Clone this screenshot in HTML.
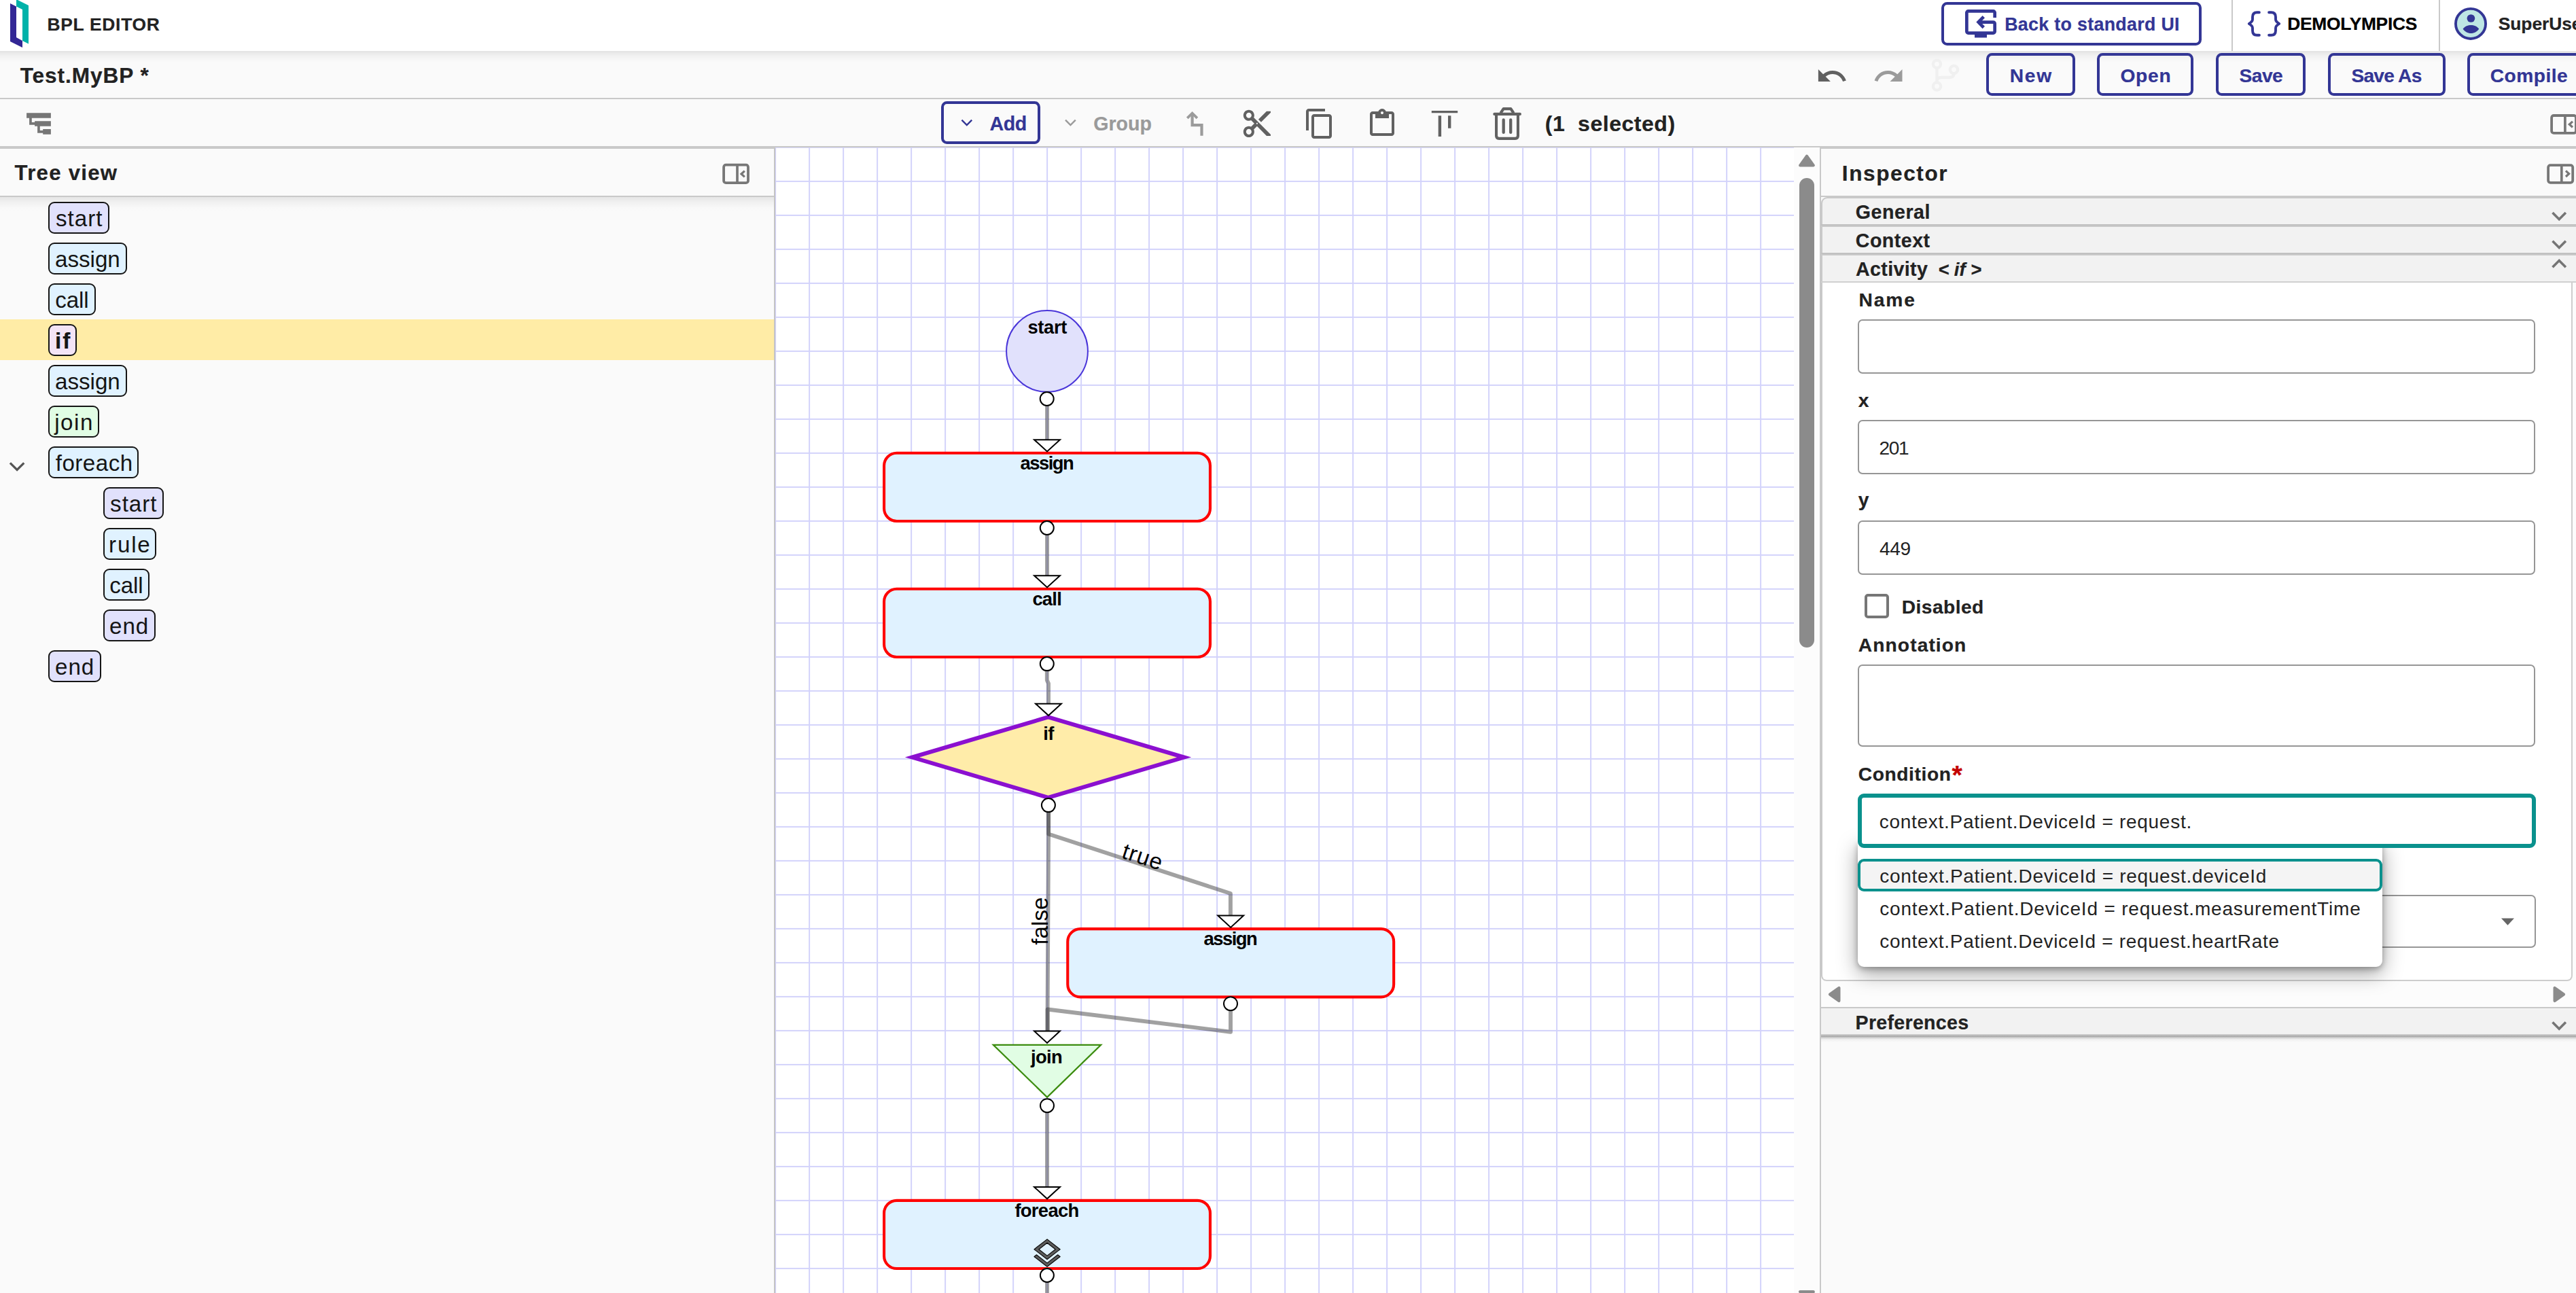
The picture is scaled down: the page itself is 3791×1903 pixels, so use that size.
<!DOCTYPE html>
<html lang="en">
<head>
<meta charset="utf-8">
<title>BPL Editor - Test.MyBP</title>
<style>
*{box-sizing:border-box;margin:0;padding:0}
html,body{width:3791px;height:1903px;overflow:hidden;background:#fafafa}
body{position:relative;font-family:"Liberation Sans",sans-serif;color:#222}
.a{position:absolute}
.t{position:absolute;white-space:pre;line-height:1;font-family:"Liberation Sans",sans-serif}
.btn{position:absolute;border:4px solid #333695;border-radius:8.5px;background:transparent}
.pill{position:absolute;border:2px solid #151515;border-radius:9px;height:47.1px}
.inp{position:absolute;border:2px solid #969696;border-radius:7px;background:#fff}
svg{position:absolute;overflow:visible}
</style>
</head>
<body>

<!-- ===== top application bar ===== -->
<header class="a" id="topbar" style="left:0;top:0;width:3791px;height:75px;background:#fff"></header>
<div class="a" style="left:0;top:75px;width:3791px;height:17px;background:linear-gradient(to bottom,rgba(0,0,0,.095),rgba(0,0,0,.04) 40%,rgba(0,0,0,0))"></div>
<div class="a" style="left:3284.3px;top:0;width:1.6px;height:75px;background:#c9c9c9"></div>
<div class="a" style="left:3589.3px;top:0;width:1.6px;height:75px;background:#c9c9c9"></div>
<div class="btn" style="left:2857px;top:3.2px;width:382.8px;height:63.6px"></div>

<!-- ===== title bar ===== -->
<div class="a" style="left:0;top:143.6px;width:3791px;height:2px;background:#c9c9c9"></div>
<div class="btn" style="left:2923.3px;top:78.3px;width:130.4px;height:63.2px"></div>
<div class="btn" style="left:3086.3px;top:78.3px;width:142.2px;height:63.2px"></div>
<div class="btn" style="left:3261.3px;top:78.3px;width:132.2px;height:63.2px"></div>
<div class="btn" style="left:3426.2px;top:78.3px;width:172.6px;height:63.2px"></div>
<div class="btn" style="left:3631.1px;top:78.3px;width:180px;height:63.2px"></div>

<!-- ===== toolbar ===== -->
<div class="a" style="left:0;top:214.9px;width:3791px;height:2.4px;background:#c9c9c9"></div>
<div class="btn" style="left:1385.2px;top:149.1px;width:145.7px;height:63.3px"></div>

<!-- ===== tree panel ===== -->
<section class="a" id="tree" style="left:0;top:217px;width:1141px;height:1686px;background:#fafafa;border-right:2px solid #c4c4c4;border-top:2px solid #c9c9c9"></section>
<div class="a" style="left:0;top:287.7px;width:1139.1px;height:2.2px;background:#c9c9c9"></div>
<div class="a" style="left:0;top:289.9px;width:1139.1px;height:21px;background:linear-gradient(to bottom,rgba(0,0,0,.082),rgba(0,0,0,.035) 40%,rgba(0,0,0,.008) 75%,rgba(0,0,0,0))"></div>
<div class="a" style="left:0;top:470px;width:1139.1px;height:59.8px;background:#ffeca6"></div>
<div class="pill" style="left:71.2px;top:296.9px;width:89.8px;background:#e1e1fc"></div>
<div class="pill" style="left:71.2px;top:356.9px;width:115.4px;background:#e0f2ff"></div>
<div class="pill" style="left:71.2px;top:416.9px;width:69.4px;background:#e0f2ff"></div>
<div class="pill" style="left:71.2px;top:476.9px;width:41.4px;background:#f3e4f6"></div>
<div class="pill" style="left:71.2px;top:536.9px;width:115.4px;background:#e0f2ff"></div>
<div class="pill" style="left:71.2px;top:596.9px;width:75.3px;background:#e1fde4"></div>
<div class="pill" style="left:71.2px;top:656.9px;width:133.3px;background:#e0f2ff"></div>
<div class="pill" style="left:151.5px;top:716.9px;width:89.1px;background:#e1e1fc"></div>
<div class="pill" style="left:151.5px;top:776.9px;width:78.2px;background:#e0f2ff"></div>
<div class="pill" style="left:151.5px;top:836.9px;width:68.9px;background:#e0f2ff"></div>
<div class="pill" style="left:151.5px;top:896.9px;width:77.0px;background:#e1e1fc"></div>
<div class="pill" style="left:71.2px;top:956.9px;width:77.8px;background:#e1e1fc"></div>

<!-- ===== diagram canvas ===== -->
<main class="a" id="canvas" style="left:1141px;top:217.2px;width:1499px;height:1685.8px;background-color:#fff;background-image:linear-gradient(to right,#d3d3fb 1.7px,transparent 1.7px),linear-gradient(to bottom,#d3d3fb 1.7px,transparent 1.7px);background-size:50px 50px;background-position:-0.9px -1.1px"></main>
<svg id="diagram" style="left:0;top:0" width="3791" height="1903" viewBox="0 0 3791 1903">
<circle cx="1541" cy="516.9" r="59.9" fill="#e1e1fc" stroke="#4a36d9" stroke-width="2"/>
<rect x="1301.05" y="666.75" width="479.9" height="100.2" rx="18.6" fill="#e0f2ff" stroke="#ff0000" stroke-width="4.1"/>
<rect x="1301.05" y="866.75" width="479.9" height="100.2" rx="18.6" fill="#e0f2ff" stroke="#ff0000" stroke-width="4.1"/>
<polygon points="1542.6,1055.4 1742.6,1114.6 1542.6,1173.8 1342.4,1114.6" fill="#ffeca9" stroke="#8b10d0" stroke-width="6"/>
<rect x="1571.25" y="1367.15" width="479.9" height="100.2" rx="18.6" fill="#e0f2ff" stroke="#ff0000" stroke-width="4.1"/>
<polygon points="1461.8,1537.8 1620.2,1537.8 1541,1614.9" fill="#e1fde4" stroke="#3c8c0f" stroke-width="2.2"/>
<rect x="1301.05" y="1766.85" width="479.9" height="100.2" rx="18.6" fill="#e0f2ff" stroke="#ff0000" stroke-width="4.1"/>
<g transform="translate(1515.6 1819.6) scale(2.12)"><path d="M11.99 18.54l-7.37-5.73L3 14.07l9 7 9-7-1.63-1.27-7.38 5.74zM12 16l7.36-5.73L21 9l-9-7-9 7 1.63 1.27L12 16zm0-11.47L17.74 9 12 13.47 6.26 9 12 4.53z" fill="#5c5c5c" stroke="#0a0a0a" stroke-width=".55" stroke-linejoin="round"/></g>
<path d="M1541 587V647" fill="none" stroke="#333" stroke-opacity=".46" stroke-width="5.9" stroke-linejoin="round"/>
<path d="M1541 777V847" fill="none" stroke="#333" stroke-opacity=".46" stroke-width="5.9" stroke-linejoin="round"/>
<path d="M1540.8 977V1001L1543 1006V1036" fill="none" stroke="#333" stroke-opacity=".46" stroke-width="5.9" stroke-linejoin="round"/>
<path d="M1543.05 1185V1227.5L1810.9 1315V1347.5" fill="none" stroke="#333" stroke-opacity=".46" stroke-width="5.9" stroke-linejoin="round"/>
<path d="M1543.05 1185V1227.5L1541.6 1485.5V1517.5" fill="none" stroke="#333" stroke-opacity=".46" stroke-width="5.9" stroke-linejoin="round"/>
<path d="M1811 1477V1518.7L1541.6 1485.5V1517.5" fill="none" stroke="#333" stroke-opacity=".46" stroke-width="5.9" stroke-linejoin="round"/>
<path d="M1541 1627V1747" fill="none" stroke="#333" stroke-opacity=".46" stroke-width="5.9" stroke-linejoin="round"/>
<path d="M1541 1877V1910" fill="none" stroke="#333" stroke-opacity=".46" stroke-width="5.9" stroke-linejoin="round"/>
<polygon points="1522.1,647.2 1559.9,647.2 1541.0,664.5" fill="#fff" stroke="#000" stroke-width="2"/>
<polygon points="1522.1,847.2 1559.9,847.2 1541.0,864.5" fill="#fff" stroke="#000" stroke-width="2"/>
<polygon points="1524.1,1035.8 1561.9,1035.8 1543.0,1053.1" fill="#fff" stroke="#000" stroke-width="2"/>
<polygon points="1792.3,1347.6 1830.1,1347.6 1811.2,1364.9" fill="#fff" stroke="#000" stroke-width="2"/>
<polygon points="1522.1,1517.6 1559.9,1517.6 1541.0,1534.9" fill="#fff" stroke="#000" stroke-width="2"/>
<polygon points="1522.1,1747.0 1559.9,1747.0 1541.0,1764.3" fill="#fff" stroke="#000" stroke-width="2"/>
<circle cx="1540.7" cy="587.0" r="10" fill="#fff" stroke="#000" stroke-width="2"/>
<circle cx="1540.8" cy="777.0" r="10" fill="#fff" stroke="#000" stroke-width="2"/>
<circle cx="1540.8" cy="977.1" r="10" fill="#fff" stroke="#000" stroke-width="2"/>
<circle cx="1542.9" cy="1185.1" r="10" fill="#fff" stroke="#000" stroke-width="2"/>
<circle cx="1811.0" cy="1477.2" r="10" fill="#fff" stroke="#000" stroke-width="2"/>
<circle cx="1541.0" cy="1627.2" r="10" fill="#fff" stroke="#000" stroke-width="2"/>
<circle cx="1540.9" cy="1877.0" r="10" fill="#fff" stroke="#000" stroke-width="2"/>
<text transform="translate(1678.4 1271.7) rotate(18.1)" text-anchor="middle" font-family="Liberation Sans, sans-serif" font-size="33.2" letter-spacing="1.1" fill="#000">true</text>
<text transform="translate(1541.6 1355.6) rotate(-90)" text-anchor="middle" font-family="Liberation Sans, sans-serif" font-size="33.2" letter-spacing="0" fill="#000">false</text>
</svg>

<!-- canvas vertical scrollbar -->
<div class="a" style="left:2640px;top:217.2px;width:38px;height:1685.8px;background:#fcfcfc"></div>
<div class="a" style="left:2648px;top:261.7px;width:22.1px;height:691.3px;border-radius:11px;background:#8b8b8b"></div>
<svg style="left:0;top:0" width="3791" height="1903">
<path d="M2659 229.8 L2668.8 243.4 L2649.2 243.4 Z" fill="#8b8b8b" stroke="#8b8b8b" stroke-width="4.2" stroke-linejoin="round"/>
<path d="M2649.4 1901.2 L2668.6 1901.2 L2659 1914 Z" fill="#8b8b8b" stroke="#8b8b8b" stroke-width="4.6" stroke-linejoin="round"/>
</svg>

<!-- ===== inspector ===== -->
<aside class="a" id="inspector" style="left:2678px;top:217px;width:1113px;height:1686px;background:#fafafa;border-left:2px solid #c9c9c9;border-top:2px solid #c9c9c9"></aside>
<div class="a" style="left:2680px;top:287.7px;width:1111px;height:2px;background:#c9c9c9"></div>
<div class="a" style="left:2680px;top:289.6px;width:1120px;height:40px;background:#f2f2f2;border-top:2px solid #c9c9c9;border-left:2px solid #c9c9c9;border-top-left-radius:9px"></div>
<div class="a" style="left:2680px;top:329.5px;width:1111px;height:4.5px;background:linear-gradient(to bottom,#bdbdbd,#cdcdcd)"></div>
<div class="a" style="left:2680px;top:334px;width:1111px;height:38px;background:#f2f2f2;border-left:2px solid #c9c9c9"></div>
<div class="a" style="left:2680px;top:371.9px;width:1111px;height:4.4px;background:linear-gradient(to bottom,#bdbdbd,#cdcdcd)"></div>
<div class="a" style="left:2680px;top:376.3px;width:1111px;height:37.3px;background:#f2f2f2;border-left:2px solid #c9c9c9"></div>
<div class="a" style="left:2680px;top:413.6px;width:1111px;height:2px;background:#d0d0d0"></div>
<div class="a" style="left:2680px;top:415.6px;width:1111px;height:1028.3px;background:#fcfcfc"></div>
<div class="a" id="activity" style="left:2680px;top:415.6px;width:1106px;height:1028.3px;background:#fff;border-left:2px solid #c9c9c9;border-right:2px solid #cdcdcd;border-bottom:2px solid #cdcdcd;border-radius:0 0 8px 8px"></div>
<div class="a" style="left:2680px;top:1443.9px;width:1111px;height:38.2px;background:#fcfcfc"></div>
<div class="a" style="left:2680px;top:1482px;width:1111px;height:40.2px;background:#f2f2f2;border-top:2px solid #c9c9c9"></div>
<div class="a" style="left:2680px;top:1522px;width:1111px;height:12px;background:linear-gradient(to bottom,#cbcbcb 0,#c9c9c9 1.8px,#a9a9a9 2.4px,#b0b0b0 3.6px,rgba(190,190,190,.6) 5.5px,rgba(215,215,215,.25) 8px,rgba(240,240,240,0) 12px)"></div>
<div class="inp" style="left:2734.1px;top:469.9px;width:997.4px;height:79.8px"></div>
<div class="inp" style="left:2734.1px;top:618.4px;width:997.4px;height:79.5px"></div>
<div class="inp" style="left:2734.1px;top:766.2px;width:997.4px;height:79.6px"></div>
<div class="a" style="left:2744.1px;top:874px;width:36px;height:36px;border:4px solid #767676;border-radius:5px;background:#fff"></div>
<div class="inp" style="left:2734.1px;top:978.3px;width:997.4px;height:121px"></div>
<div class="inp" style="left:2734.1px;top:1316.5px;width:997.5px;height:78.7px"></div>
<div class="a" style="left:2733.8px;top:1240px;width:772.1px;height:183.4px;background:#fff;border-radius:0 0 9px 9px;box-shadow:0 3px 9px rgba(0,0,0,.28),0 9px 30px 1px rgba(0,0,0,.36)"></div>
<div class="a" style="left:2733.8px;top:1264.1px;width:772.1px;height:47.5px;background:#f4f4f4;border:4px solid #0a918d;border-radius:9px"></div>
<div class="a" style="left:2733.8px;top:1167.9px;width:997.9px;height:79.9px;background:#fff;border:6px solid #0a918d;border-radius:9px"></div>

<svg id="icons" style="left:0;top:0" width="3791" height="1903" viewBox="0 0 3791 1903">
<polygon points="24,-1 42,8 42,64.5 33,60 33,14 24,9.5" fill="#00b2a9"/>
<polygon points="15,5 24,9.5 24,55 33,60 33,70 15,61" fill="#332795"/>
<g fill="none" stroke="#333695" stroke-width="4.7"><path d="M2935.65 25.9V18.6a2.2 2.2 0 0 0-2.2-2.2H2896.55a2.2 2.2 0 0 0-2.2 2.2V46.35a2.2 2.2 0 0 0 2.2 2.2H2933.45a2.2 2.2 0 0 0 2.2-2.2V34.8a2.2 2.2 0 0 0-2.2-2.2H2911.6" stroke-linejoin="round"/><path d="M2919.3 24.7L2911.6 32.6L2919.3 40.5"/></g>
<rect x="2906" y="50.6" width="18" height="4.8" fill="#333695"/>
<g fill="none" stroke="#333695" stroke-width="3.9" stroke-linecap="round" stroke-linejoin="round"><path d="M3324.9 18.2H3321.6Q3315 18.2 3315 25V28.6Q3315 31.8 3309.8 34.95Q3315 38.1 3315 41.3V45Q3315 51.8 3321.6 51.8H3324.9"/><path d="M3339.1 18.2H3342.4Q3349 18.2 3349 25V28.6Q3349 31.8 3354.2 34.95Q3349 38.1 3349 41.3V45Q3349 51.8 3342.4 51.8H3339.1"/></g>
<circle cx="3636" cy="34.9" r="22.05" fill="#bee6e4" stroke="#333695" stroke-width="3.9"/>
<circle cx="3636.4" cy="27" r="5.85" fill="#333695"/>
<path d="M3624.6 42.6C3627.5 38.7 3632 37.1 3636.4 37.1C3640.8 37.1 3645.3 38.7 3648.2 42.6C3645.6 46.6 3641.3 49.1 3636.4 49.1C3631.5 49.1 3627.2 46.6 3624.6 42.6Z" fill="#333695"/>
<g transform="translate(2671.9 88) scale(2.0000)"><path d="M12.5 8c-2.65 0-5.05.99-6.9 2.6L2 7v9h9l-3.62-3.62c1.39-1.16 3.16-1.88 5.12-1.88 3.54 0 6.55 2.31 7.6 5.5l2.37-.78C21.08 11.03 17.15 8 12.5 8z" fill="#616161" /></g>
<g transform="translate(2755.5 88) scale(2.0000)"><path d="M18.4 10.6C16.55 8.99 14.15 8 11.5 8c-4.65 0-8.58 3.03-9.96 7.22L3.9 16c1.05-3.19 4.05-5.5 7.6-5.5 1.95 0 3.73.72 5.12 1.88L13 16h9V7l-3.6 3.6z" fill="#9b9b9b" /></g>
<g fill="none" stroke="#f0f0f0" stroke-width="4.4"><circle cx="2850.5" cy="94.3" r="5.6"/><circle cx="2850.5" cy="127" r="5.6"/><circle cx="2875.5" cy="102.5" r="5.6"/><path d="M2850.5 100V121.5M2875.5 108.1Q2875.5 114 2869 114H2857Q2850.5 114 2850.5 119"/></g>
<path fill="#767676" d="M39.1 166.2H74.9V173.75H46.8V180.1H51.1V178.2H74.9V185.7H58.8V192.1H63.2V190.1H74.9V197.7H63.2V195.8H55.1V185.7H51.1V183.8H43.1V173.75H39.1Z"/>
<path d="M1415.4 176.7L1422.8 184.1L1430.2 176.7" fill="none" stroke="#333695" stroke-width="2.4"/>
<path d="M1568 176.7L1575.4 184.1L1582.8 176.7" fill="none" stroke="#9a9a9a" stroke-width="2.4"/>
<g fill="none" stroke="#9b9b9b" stroke-width="4.2"><path d="M1747.3 173.9L1754.6 166.7L1761.9 173.9" stroke-width="3.9"/><path d="M1754.6 167.5V184.05H1768.5V199.8"/></g>
<g transform="translate(1825.8 157.7) scale(2.0100)"><path d="M9.64 7.64c.23-.5.36-1.05.36-1.64 0-2.21-1.79-4-4-4S2 3.79 2 6s1.79 4 4 4c.59 0 1.14-.13 1.64-.36L10 12l-2.36 2.36C7.14 14.13 6.59 14 6 14c-2.21 0-4 1.79-4 4s1.79 4 4 4 4-1.79 4-4c0-.59-.13-1.14-.36-1.64L12 14l7 7h3v-1L9.64 7.64zM6 8c-1.1 0-2-.89-2-2s.9-2 2-2 2 .89 2 2-.9 2-2 2zm0 12c-1.1 0-2-.89-2-2s.9-2 2-2 2 .89 2 2-.9 2-2 2zm6-7.5c-.28 0-.5-.22-.5-.5s.22-.5.5-.5.5.22.5.5-.22.5-.5.5zM19 3l-6 6 2 2 7-7V3z" fill="#616161" /></g>
<g transform="translate(1918 158) scale(2.0000)"><path d="M16 1H4c-1.1 0-2 .9-2 2v14h2V3h12V1zm3 4H8c-1.1 0-2 .9-2 2v14c0 1.1.9 2 2 2h11c1.1 0 2-.9 2-2V7c0-1.1-.9-2-2-2zm0 16H8V7h11v14z" fill="#616161" /></g>
<g transform="translate(2010 158) scale(2.0000)"><path d="M5 21q-.825 0-1.412-.587T3 19V5q0-.825.588-1.412T5 3h4.175q.275-.875 1.075-1.437T12 1q1 0 1.788.563T14.85 3H19q.825 0 1.413.588T21 5v14q0 .825-.587 1.413T19 21zm0-2h14V5h-2v3H7V5H5zm7-14q.425 0 .713-.288T13 4t-.288-.712T12 3t-.712.288T11 4t.288.713T12 5" fill="#616161" /></g>
<path fill="#616161" d="M2106.8 162.9H2145.2V166.3H2106.8ZM2116.7 170.2H2121.1V200.9H2116.7ZM2131 170.2H2135.4V188.8H2131Z"/>
<g fill="none" stroke="#616161" stroke-width="4.1" stroke-linejoin="round"><path d="M2199.3 167.9H2236.9" stroke-linecap="round"/><path d="M2208.4 166.5L2212.6 160.15H2223.4L2227.6 166.5"/><path d="M2202.05 169V199.8Q2202.05 203.85 2206.1 203.85H2229.9Q2233.95 203.85 2233.95 199.8V169"/><path d="M2212.7 176.5V194.9M2223.2 176.5V194.9" stroke-width="4.3" stroke-linecap="round"/></g>
<rect x="1065.1000000000001" y="242.70000000000002" width="35.900000000000006" height="26.4" rx="3.2" fill="none" stroke="#777" stroke-width="3.8"/><path d="M1085 242.8V269.0" stroke="#777" stroke-width="3.7" fill="none"/><path d="M1095.8 251.6L1091 256L1095.8 260.4" fill="none" stroke="#777" stroke-width="3.2"/>
<rect x="3755.1" y="170.0" width="35.900000000000006" height="25.9" rx="3.2" fill="none" stroke="#777" stroke-width="3.8"/><path d="M3774.9 170.1V195.79999999999998" stroke="#777" stroke-width="3.7" fill="none"/><path d="M3786 178.9L3781.3 183.1L3786 187.3" fill="none" stroke="#777" stroke-width="3.2"/>
<rect x="3750.1" y="243.1" width="36.1" height="25.7" rx="3.2" fill="none" stroke="#777" stroke-width="3.8"/><path d="M3769.8 243.2V268.7" stroke="#777" stroke-width="3.7" fill="none"/><path d="M3776 251.4L3780.6 255.7L3776 260" fill="none" stroke="#777" stroke-width="3.2"/>
<path d="M3756.5 313.09999999999997L3766.2 322.79999999999995L3775.9 313.09999999999997" fill="none" stroke="#757575" stroke-width="3.6"/>
<path d="M3756.5 354.8L3766.2 364.5L3775.9 354.8" fill="none" stroke="#757575" stroke-width="3.6"/>
<path d="M3756.5 393.2L3766.2 383.5L3775.9 393.2" fill="none" stroke="#757575" stroke-width="3.6"/>
<path d="M3756.5 1504.5L3766.2 1514.2L3775.9 1504.5" fill="none" stroke="#757575" stroke-width="3.6"/>
<path d="M14.9 681.3L25.1 691.5L35.3 681.3" fill="none" stroke="#555" stroke-width="3.3"/>
<path d="M3681 1351.6H3700L3690.5 1361.8Z" fill="#666"/>
<path d="M2706.4 1453.9V1473.1L2693 1463.5Z" fill="#8b8b8b" stroke="#8b8b8b" stroke-width="4.2" stroke-linejoin="round"/>
<path d="M3759.6 1453.9V1473.1L3773 1463.5Z" fill="#8b8b8b" stroke="#8b8b8b" stroke-width="4.2" stroke-linejoin="round"/>
</svg>

<span class="t" style="left:69.50px;top:22.80px;font-size:26.4px;color:#232323;font-weight:bold;-webkit-text-stroke:.22px #232323;letter-spacing:0.714px">BPL EDITOR</span>
<span class="t" style="left:2950.20px;top:22.70px;font-size:26.8px;color:#333695;font-weight:bold;-webkit-text-stroke:.22px #333695;letter-spacing:0.316px">Back to standard UI</span>
<span class="t" style="left:3366.30px;top:21.60px;font-size:26.4px;color:#000;font-weight:bold;-webkit-text-stroke:.22px #000;letter-spacing:-0.305px">DEMOLYMPICS</span>
<span class="t" style="left:3676.70px;top:21.60px;font-size:26.4px;color:#232323;font-weight:bold;-webkit-text-stroke:.22px #232323;letter-spacing:-0.050px">SuperUser</span>
<span class="t" style="left:29.70px;top:95.70px;font-size:31.6px;color:#222;font-weight:bold;-webkit-text-stroke:.22px #222;letter-spacing:0.935px">Test.MyBP *</span>
<span class="t" style="left:2957.70px;top:97.10px;font-size:28.2px;color:#333695;font-weight:bold;-webkit-text-stroke:.22px #333695;letter-spacing:1.734px">New</span>
<span class="t" style="left:3120.40px;top:97.10px;font-size:28.2px;color:#333695;font-weight:bold;-webkit-text-stroke:.22px #333695;letter-spacing:0.760px">Open</span>
<span class="t" style="left:3295.50px;top:97.10px;font-size:28.2px;color:#333695;font-weight:bold;-webkit-text-stroke:.22px #333695;letter-spacing:-0.551px">Save</span>
<span class="t" style="left:3460.50px;top:97.10px;font-size:28.2px;color:#333695;font-weight:bold;-webkit-text-stroke:.22px #333695;letter-spacing:-0.803px">Save As</span>
<span class="t" style="left:3664.80px;top:97.10px;font-size:28.2px;color:#333695;font-weight:bold;-webkit-text-stroke:.22px #333695;letter-spacing:0.447px">Compile</span>
<span class="t" style="left:1456.50px;top:168.20px;font-size:28.6px;color:#333695;font-weight:bold;-webkit-text-stroke:.22px #333695;letter-spacing:-0.408px">Add</span>
<span class="t" style="left:1609.20px;top:168.20px;font-size:28.6px;color:#9a9a9a;font-weight:bold;-webkit-text-stroke:.22px #9a9a9a;letter-spacing:0.025px">Group</span>
<span class="t" style="left:2273.70px;top:165.50px;font-size:32.0px;color:#222;font-weight:bold;-webkit-text-stroke:.22px #222;letter-spacing:0.532px">(1  selected)</span>
<span class="t" style="left:21.60px;top:239.30px;font-size:31.2px;color:#222;font-weight:bold;-webkit-text-stroke:.22px #222;letter-spacing:1.253px">Tree view</span>
<span class="t" style="left:2710.80px;top:240.10px;font-size:31.6px;color:#222;font-weight:bold;-webkit-text-stroke:.22px #222;letter-spacing:1.574px">Inspector</span>
<span class="t" style="left:2730.80px;top:297.90px;font-size:28.6px;color:#222;font-weight:bold;-webkit-text-stroke:.22px #222;letter-spacing:0.526px">General</span>
<span class="t" style="left:2730.80px;top:339.90px;font-size:28.6px;color:#222;font-weight:bold;-webkit-text-stroke:.22px #222;letter-spacing:0.465px">Context</span>
<span class="t" style="left:2731.00px;top:381.50px;font-size:28.6px;color:#222;font-weight:bold;-webkit-text-stroke:.22px #222;letter-spacing:0.359px">Activity</span>
<span class="t" style="left:2852.20px;top:382.50px;font-size:27.5px;color:#222;font-weight:bold;-webkit-text-stroke:.22px #222;font-style:italic;letter-spacing:-0.048px">&lt; if &gt;</span>
<span class="t" style="left:2730.60px;top:1490.50px;font-size:28.6px;color:#222;font-weight:bold;-webkit-text-stroke:.22px #222;letter-spacing:0.277px">Preferences</span>
<span class="t" style="left:2735.50px;top:426.80px;font-size:28.2px;color:#222;font-weight:bold;-webkit-text-stroke:.22px #222;letter-spacing:1.868px">Name</span>
<span class="t" style="left:2734.80px;top:575.10px;font-size:28.2px;color:#222;font-weight:bold;-webkit-text-stroke:.22px #222">x</span>
<span class="t" style="left:2734.80px;top:721.20px;font-size:28.2px;color:#222;font-weight:bold;-webkit-text-stroke:.22px #222">y</span>
<span class="t" style="left:2798.80px;top:879.00px;font-size:28.2px;color:#222;font-weight:bold;-webkit-text-stroke:.22px #222;letter-spacing:0.433px">Disabled</span>
<span class="t" style="left:2734.80px;top:934.70px;font-size:28.2px;color:#222;font-weight:bold;-webkit-text-stroke:.22px #222;letter-spacing:1.088px">Annotation</span>
<span class="t" style="left:2734.80px;top:1124.70px;font-size:28.2px;color:#222;font-weight:bold;-webkit-text-stroke:.22px #222;letter-spacing:0.578px">Condition</span>
<span class="t" style="left:2872.50px;top:1121.20px;font-size:39.5px;color:#c30000;font-weight:bold;-webkit-text-stroke:.22px #c30000">*</span>
<span class="t" style="left:2765.60px;top:645.70px;font-size:28.0px;color:#232323;letter-spacing:-1.372px">201</span>
<span class="t" style="left:2766.10px;top:793.70px;font-size:28.0px;color:#232323;letter-spacing:-0.422px">449</span>
<span class="t" style="left:2765.70px;top:1196.30px;font-size:28.0px;color:#232323;letter-spacing:0.719px">context.Patient.DeviceId = request.</span>
<span class="t" style="left:2766.20px;top:1275.90px;font-size:28.0px;color:#232323;letter-spacing:0.709px">context.Patient.DeviceId = request.deviceId</span>
<span class="t" style="left:2766.20px;top:1323.70px;font-size:28.0px;color:#232323;letter-spacing:0.820px">context.Patient.DeviceId = request.measurementTime</span>
<span class="t" style="left:2766.20px;top:1371.70px;font-size:28.0px;color:#232323;letter-spacing:0.693px">context.Patient.DeviceId = request.heartRate</span>
<span class="t" style="left:82.00px;top:305.00px;font-size:33.2px;color:#151515;letter-spacing:0.969px">start</span>
<span class="t" style="left:81.00px;top:365.00px;font-size:33.2px;color:#151515;letter-spacing:-0.035px">assign</span>
<span class="t" style="left:81.20px;top:425.00px;font-size:33.2px;color:#151515;letter-spacing:-0.141px">call</span>
<span class="t" style="left:81.00px;top:485.00px;font-size:33.2px;color:#151515;font-weight:bold;-webkit-text-stroke:.22px #151515;letter-spacing:2.079px">if</span>
<span class="t" style="left:81.00px;top:545.00px;font-size:33.2px;color:#151515;letter-spacing:-0.035px">assign</span>
<span class="t" style="left:80.20px;top:605.00px;font-size:33.2px;color:#151515;letter-spacing:1.499px">join</span>
<span class="t" style="left:81.70px;top:665.00px;font-size:33.2px;color:#151515;letter-spacing:0.477px">foreach</span>
<span class="t" style="left:162.10px;top:725.00px;font-size:33.2px;color:#151515;letter-spacing:0.944px">start</span>
<span class="t" style="left:160.10px;top:785.00px;font-size:33.2px;color:#151515;letter-spacing:1.773px">rule</span>
<span class="t" style="left:161.30px;top:845.00px;font-size:33.2px;color:#151515;letter-spacing:-0.141px">call</span>
<span class="t" style="left:161.10px;top:905.00px;font-size:33.2px;color:#151515;letter-spacing:0.893px">end</span>
<span class="t" style="left:81.00px;top:965.00px;font-size:33.2px;color:#151515;letter-spacing:0.943px">end</span>
<span class="t" style="left:1512.40px;top:467.90px;font-size:27.4px;color:#000;font-weight:bold;letter-spacing:-0.337px">start</span>
<span class="t" style="left:1501.40px;top:667.50px;font-size:27.4px;color:#000;font-weight:bold;letter-spacing:-1.468px">assign</span>
<span class="t" style="left:1519.40px;top:867.50px;font-size:27.4px;color:#000;font-weight:bold;letter-spacing:-0.759px">call</span>
<span class="t" style="left:1535.20px;top:1065.70px;font-size:27.4px;color:#000;font-weight:bold;letter-spacing:-0.510px">if</span>
<span class="t" style="left:1771.60px;top:1368.30px;font-size:27.4px;color:#000;font-weight:bold;letter-spacing:-1.528px">assign</span>
<span class="t" style="left:1517.00px;top:1542.30px;font-size:27.4px;color:#000;font-weight:bold;letter-spacing:-0.617px">join</span>
<span class="t" style="left:1493.40px;top:1767.70px;font-size:27.4px;color:#000;font-weight:bold;letter-spacing:-0.685px">foreach</span>
</body>
</html>
